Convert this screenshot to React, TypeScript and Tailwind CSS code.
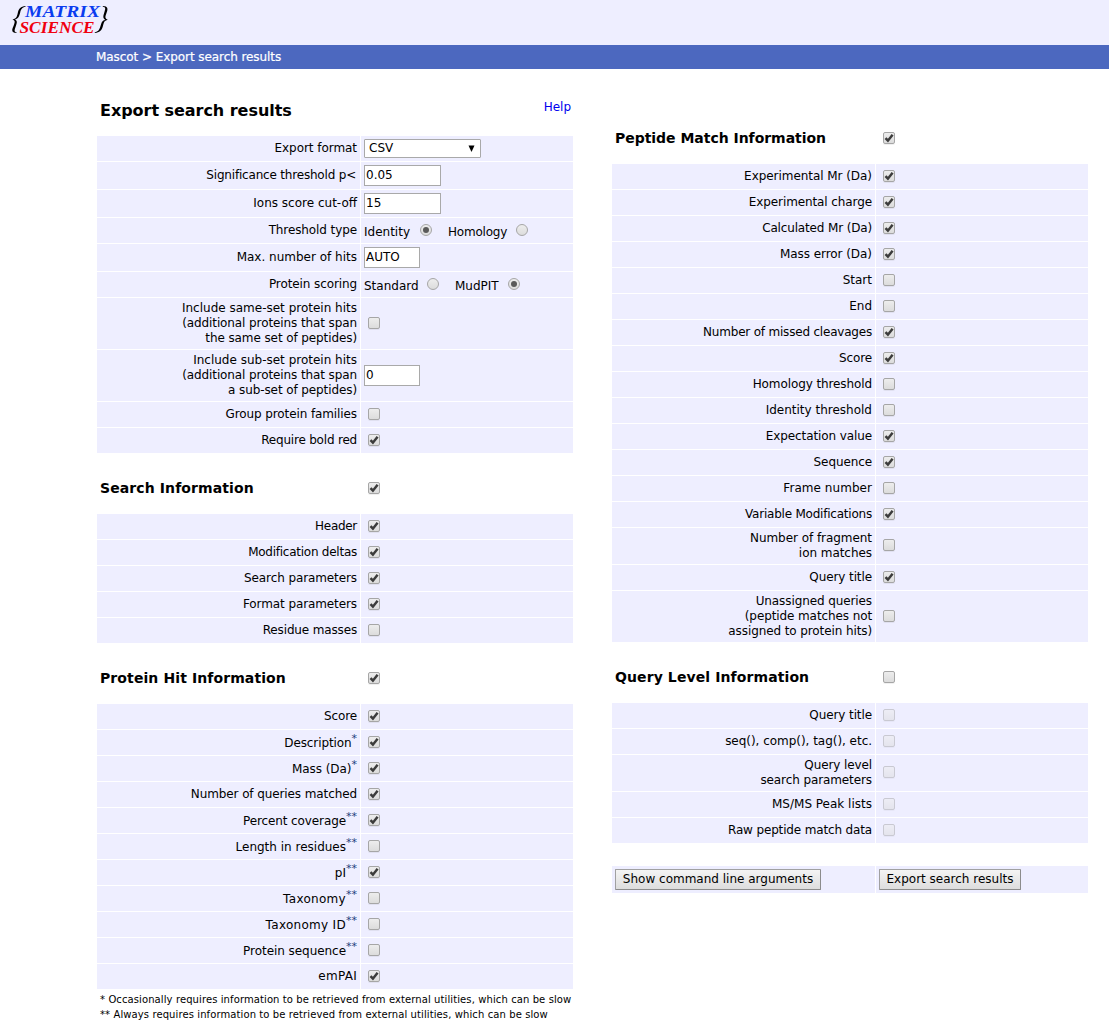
import React from "react";

type RowData = {
  label: React.ReactNode;
  h?: string;
  checked?: boolean;
  disabled?: boolean;
  sup?: string;
  control?: React.ReactNode;
  track?: string;
};

function Check({ checked, disabled }: { checked?: boolean; disabled?: boolean }) {
  return (
    <span
      className={
        "block h-3 w-3 shrink-0 rounded-[2px] border border-[#a6a6a6] bg-gradient-to-b from-[#ededed] to-[#dcdcdc] shadow-[0_1px_0_rgba(0,0,0,0.06)] " +
        (disabled ? "opacity-50" : "")
      }
    >
      {checked && (
        <svg viewBox="0 0 10 10" className="block h-2.5 w-2.5">
          <path d="M1.500 5.200 L3.900 7.700 L8.600 1.700" fill="none" stroke="#3c3c3c" strokeWidth="2.500" />
        </svg>
      )}
    </span>
  );
}

function Radio({ on }: { on?: boolean }) {
  return (
    <span className="mb-0.5 flex h-3 w-3 shrink-0 items-center justify-center rounded-full border border-[#a6a6a6] bg-gradient-to-b from-[#ededed] to-[#dcdcdc]">
      {on && <span className="block h-1.5 w-1.5 rounded-full bg-[#5a5a5a]" />}
    </span>
  );
}

function Field({ value, w }: { value: string; w: string }) {
  return (
    <span className={"flex h-[21px] items-center border border-[#a9a9a9] bg-white pl-px " + w}>{value}</span>
  );
}

function Row({ label, h = "h-[25px]", checked, disabled, sup, control, track = "tracking-[-0.1px]" }: RowData) {
  return (
    <div className={"flex gap-px " + h}>
      <div className={"flex w-[263px] items-center justify-end bg-[#eeeeff] pr-[3px] text-right " + track}>
        <span className={sup ? "relative top-px" : ""}>
          {label}
          {sup && <sup className="relative -top-[5px] align-baseline text-[11px] leading-none tracking-normal text-[#23407c]">{sup}</sup>}
        </span>
      </div>
      <div className="flex w-[212px] items-center bg-[#eeeeff] pl-[3px]">
        {control ?? (
          <span className={h === "h-[36px]" ? "mb-0.5 ml-1" : "mb-px ml-1"}>
            <Check checked={checked} disabled={disabled} />
          </span>
        )}
      </div>
    </div>
  );
}

function Table({ rows }: { rows: RowData[] }) {
  return (
    <div className="flex w-[476px] flex-col gap-px">
      {rows.map((r, i) => (
        <Row key={i} {...r} />
      ))}
    </div>
  );
}

function Heading({ text, checked, h, track = "tracking-[0.1px]" }: { text: string; checked?: boolean; h: string; track?: string }) {
  return (
    <div className={"flex w-[476px] items-center " + h}>
      <h2 className={"w-[271px] pl-[3px] text-[14px] font-bold " + track}>{text}</h2>
      <Check checked={checked} />
    </div>
  );
}

const exportRows: RowData[] = [
  {
    label: "Export format",
    track: "tracking-[-0.05px]",
    control: (
      <span className="flex h-[19px] w-[117px] items-center justify-between rounded-[1px] border border-[#a9a9a9] bg-white pr-[5px] pl-[4px]">
        <span>CSV</span>
        <svg viewBox="0 0 7 7" className="mb-px h-[7px] w-[7px]">
          <path d="M0.500 0.500 H6.500 L3.500 7 Z" fill="#000" />
        </svg>
      </span>
    ),
  },
  {
    label: <span className="mr-px">Significance threshold p&lt;</span>,
    h: "h-[27px]",
    track: "tracking-[-0.19px]",
    control: <Field value="0.05" w="w-[77px]" />,
  },
  { label: "Ions score cut-off", h: "h-[27px]", track: "tracking-normal", control: <Field value="15" w="w-[77px]" /> },
  {
    label: "Threshold type",
    control: (
      <span className="flex items-center">
        <span className="w-14 pt-[3px]">Identity</span>
        <Radio on />
        <span className="ml-4 w-[68px] pt-[3px] tracking-[-0.2px]">Homology</span>
        <Radio />
      </span>
    ),
  },
  { label: "Max. number of hits", h: "h-[27px]", track: "tracking-normal", control: <Field value="AUTO" w="w-14" /> },
  {
    label: "Protein scoring",
    control: (
      <span className="flex items-center">
        <span className="w-[63px] pt-[3px]">Standard</span>
        <Radio />
        <span className="ml-4 w-[53px] pt-[3px]">MudPIT</span>
        <Radio on />
      </span>
    ),
  },
  {
    label: <><span className="tracking-normal">Include same-set protein hits</span><br />(additional proteins that span<br />the same set of peptides)</>,
    h: "h-[51px]",
  },
  {
    label: <><span className="tracking-normal">Include sub-set protein hits</span><br />(additional proteins that span<br />a sub-set of peptides)</>,
    h: "h-[51px]",
    control: <Field value="0" w="w-14" />,
  },
  { label: "Group protein families" },
  { label: "Require bold red", checked: true, track: "tracking-[-0.2px]" },
];

const searchRows: RowData[] = [
  { label: "Header", checked: true, track: "tracking-[-0.3px]" },
  { label: "Modification deltas", checked: true, track: "tracking-[-0.25px]" },
  { label: "Search parameters", checked: true },
  { label: "Format parameters", checked: true },
  { label: "Residue masses", track: "tracking-[-0.15px]" },
];

const proteinRows: RowData[] = [
  { label: "Score", checked: true },
  { label: "Description", sup: "*", checked: true },
  { label: "Mass (Da)", sup: "*", checked: true, track: "tracking-[-0.05px]" },
  { label: "Number of queries matched", checked: true },
  { label: "Percent coverage", sup: "**", checked: true },
  { label: "Length in residues", sup: "**", track: "tracking-normal" },
  { label: "pI", sup: "**", checked: true, track: "tracking-normal" },
  { label: "Taxonomy", sup: "**", track: "tracking-[0.3px]" },
  { label: "Taxonomy ID", sup: "**", track: "tracking-[0.3px]" },
  { label: "Protein sequence", sup: "**", track: "tracking-[-0.05px]" },
  { label: "emPAI", checked: true, track: "tracking-[0.3px]" },
];

const peptideRows: RowData[] = [
  { label: "Experimental Mr (Da)", checked: true, track: "tracking-[-0.05px]" },
  { label: "Experimental charge", checked: true },
  { label: "Calculated Mr (Da)", checked: true, track: "tracking-[-0.15px]" },
  { label: "Mass error (Da)", checked: true, track: "tracking-[-0.05px]" },
  { label: "Start", track: "tracking-normal" },
  { label: "End", track: "tracking-normal" },
  { label: "Number of missed cleavages", checked: true, track: "tracking-[-0.2px]" },
  { label: "Score", checked: true },
  { label: "Homology threshold" },
  { label: "Identity threshold", track: "tracking-normal" },
  { label: "Expectation value", checked: true },
  { label: "Sequence", checked: true },
  { label: "Frame number", track: "tracking-[0.05px]" },
  { label: "Variable Modifications", checked: true, track: "tracking-[-0.22px]" },
  { label: <>Number of fragment<br />ion matches</>, h: "h-[36px]", track: "tracking-[-0.05px]" },
  { label: "Query title", checked: true },
  { label: <>Unassigned queries<br />(peptide matches not<br />assigned to protein hits)</>, h: "h-[51px]" },
];

const queryRows: RowData[] = [
  { label: "Query title", disabled: true },
  { label: "seq(), comp(), tag(), etc.", disabled: true, track: "tracking-[-0.03px]" },
  { label: <>Query level<br />search parameters</>, h: "h-[36px]", disabled: true },
  { label: "MS/MS Peak lists", disabled: true, track: "tracking-normal" },
  { label: "Raw peptide match data", disabled: true, track: "tracking-[-0.15px]" },
];

function PushButton({ text, w }: { text: string; w: string }) {
  return (
    <button
      className={
        "flex h-[21px] items-center justify-center rounded-[1px] border border-[#a0a0a0] border-r-[#8c8c8c] border-b-[#8c8c8c] bg-gradient-to-b from-[#f4f4f4] to-[#dddddd] whitespace-nowrap " +
        w
      }
    >
      {text}
    </button>
  );
}

function Logo() {
  return (
    <svg viewBox="0 0 110 45" className="block h-[45px] w-[110px]">
      <g fontFamily="'Liberation Serif', serif" fontStyle="italic" fontWeight="bold" fontSize="14">
        <text transform="translate(25 16.600) scale(1 1.130)" fill="#0a3cf0" textLength="75" lengthAdjust="spacingAndGlyphs">MATRIX</text>
        <text transform="translate(19.500 33) scale(1 1.130)" fill="#f00010" textLength="75" lengthAdjust="spacingAndGlyphs">SCIENCE</text>
      </g>
      <g fill="#000">
        <path d="M25.500 6 C20.500 6.500 19 8.500 18 12 C17 16 17 18.500 12.500 19.600 C15.500 20.500 15 22.500 13.500 26 C11.500 30 11.500 33 16.500 32.800 V32 C13.800 32 14.500 30 15.700 26.500 C17.200 22.500 17.500 21 14.800 19.600 C18.500 18.500 19 16.500 20.200 12.500 C21 9.500 22 7.300 25.500 6.800 Z" />
        <path d="M102.800 6 C108 6 108.200 9 106.500 13 C105 17 104.800 18.500 107.800 19.700 C103.800 20.800 104 22.500 102.800 26.500 C101.500 30.500 99.800 32.500 94.800 33 V32.200 C98.300 31.700 99.300 30 100.500 26 C101.800 22 102 20.700 105.300 19.700 C102.700 18.300 103 16.500 104.300 12.500 C105.500 9 106 7 102.800 6.800 Z" />
      </g>
    </svg>
  );
}

export default function App() {
  return (
    <div className="h-[1032px] w-[1109px] overflow-hidden bg-white font-['DejaVu_Sans',sans-serif] text-[12px] leading-[15px] text-black">
      <header className="h-[45px] bg-[#eeeeff]">
        <Logo />
      </header>
      <nav className="flex h-6 items-center bg-[#4c68bf] pl-24 tracking-[-0.07px] text-white [-webkit-text-stroke:0.2px_white]">Mascot &gt; Export search results</nav>
      <main className="flex gap-[39px] pl-[97px]">
        <section className="w-[476px]">
          <div className="flex h-[67px] justify-between pr-[2px] pl-[3px]">
            <h1 className="pt-[34px] text-[16px] font-bold tracking-[-0.04px]">Export search results</h1>
            <a className="pt-[31px] text-[#0000ee]">Help</a>
          </div>
          <Table rows={exportRows} />
          <Heading text="Search Information" checked h="h-[61px] pt-[9px]" />
          <Table rows={searchRows} />
          <Heading text="Protein Hit Information" checked h="h-[61px] pt-[9px]" />
          <Table rows={proteinRows} />
          <div className="pt-[3px] pl-[3px] text-[10px] tracking-[0.1px] whitespace-nowrap">
            <p>* Occasionally requires information to be retrieved from external utilities, which can be slow</p>
            <p>** Always requires information to be retrieved from external utilities, which can be slow</p>
          </div>
        </section>
        <section className="w-[476px]">
          <Heading text="Peptide Match Information" checked h="h-[95px] pt-[43px]" track="tracking-[-0.03px]" />
          <Table rows={peptideRows} />
          <Heading text="Query Level Information" h="h-[61px] pt-[9px]" />
          <Table rows={queryRows} />
          <div className="mt-[23px] flex h-[27px] gap-px">
            <div className="flex w-[263px] items-center bg-[#eeeeff] pl-[3px]">
              <PushButton text="Show command line arguments" w="w-[206px]" />
            </div>
            <div className="flex w-[212px] items-center bg-[#eeeeff] pl-[3px]">
              <PushButton text="Export search results" w="w-[142px]" />
            </div>
          </div>
        </section>
      </main>
    </div>
  );
}
